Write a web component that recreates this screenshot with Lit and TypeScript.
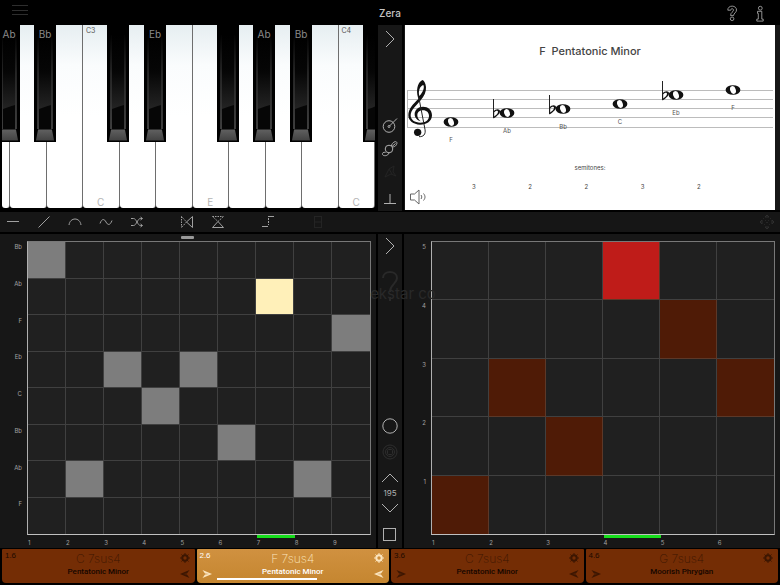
import { LitElement, html, svg, css, nothing, type TemplateResult } from "lit";
import { customElement, property, state } from "lit/decorators.js";
import { classMap } from "lit/directives/class-map.js";
import { styleMap } from "lit/directives/style-map.js";

const icon = (body: unknown, size = 20): TemplateResult => html`<svg
  class="icon"
  width=${size}
  height=${size}
  viewBox="0 0 ${size} ${size}"
  aria-hidden="true"
>${body}</svg>`;

const icons = {
  menu: svg`<path d="M2 4.500H18M2 9.500H18M2 13.500H18"/>`,
  help: svg`<path stroke-width=".8" d="M5.800 7.200C5.500 1.800 14.500 1.800 14.500 7C14.500 9.800 11.600 10 11.600 12.600H8.600C8.400 9.200 11.500 9.200 11.500 7.100C11.500 5.200 8.700 5.300 8.800 7.200z"/><circle stroke-width=".8" cx="10.100" cy="15.800" r="1.800"/>`,
  info: svg`<circle stroke-width=".8" cx="10.300" cy="5.200" r="1.900"/><path stroke-width=".8" d="M7.500 8.300h4.300v7.800h1.400v2H6.800v-2h1.500v-5.700h-.8z"/>`,
  right: svg`<path d="M6 2L14 10L6 18"/>`,
  up: svg`<path d="M2 14L10 6L18 14"/>`,
  down: svg`<path d="M2 6L10 14L18 6"/>`,
  needle: svg`<circle cx="9" cy="10.500" r="5.800"/><circle cx="9" cy="10.500" r="1"/><path d="M9.500 10L17 2.500"/>`,
  curl: svg`<circle cx="9" cy="10" r="3.800"/><path d="M5.500 13.500c-2-.8-3.500.5-3 2 .8 1.800 5.500 1.800 6.500-1.600M11.500 7C11.500 4.500 14.500 2 16.300 2.800C18 4 16 8 12.500 8M12 7.500L15.500 4.500"/>`,
  nib: svg`<path d="M5 15l4-8 5-3-1 6 3 4-5-2zM9 7l3 5"/>`,
  perp: svg`<path d="M4 14.500H16M10 14.500V5"/>`,
  circle: svg`<circle cx="10" cy="10" r="7.200"/>`,
  target: svg`<circle cx="10" cy="10" r="7"/><circle cx="10" cy="10" r="4.500"/><rect x="7.500" y="7.500" width="5" height="5" rx="1"/>`,
  square: svg`<rect x="3.500" y="4.500" width="12" height="12"/>`,
  flat: svg`<path d="M4 9.500H16"/>`,
  ramp: svg`<path d="M4.500 15.500L15.500 4.500"/>`,
  arc: svg`<path d="M4 13C5 5 15 5 16 13"/>`,
  wave: svg`<path d="M4 11.500C6 6 8.500 7 10 10S14 14 16 8.500"/>`,
  shuffle: svg`<path d="M4 6.500h2.500c3 0 4 7 7 7H15M4 13.500h2.500c3 0 4-7 7-7H15M13.500 5L15.500 6.500L13.500 8M13.500 12L15.500 13.500L13.500 15"/>`,
  mirrorH: svg`<path d="M15.500 4.500V15.500L9.500 10z"/><path stroke-dasharray="1.500 1" d="M4.500 4.500V15.500M4.500 4.500L9.500 10L4.500 15.500"/>`,
  mirrorV: svg`<path d="M4.500 15.500H15.500L10 9.500z"/><path stroke-dasharray="1.500 1" d="M4.500 4.500H15.500M4.500 4.500L10 9.500L15.500 4.500"/>`,
  step: svg`<path d="M10 4.500h6M4 14.500h6"/><path stroke-dasharray="2 1" d="M10.500 6V13"/>`,
  stack: svg`<rect x="6.500" y="4.500" width="7" height="11"/><path d="M6.500 10h7"/>`,
  move: svg`<path d="M8 5L10 3L12 5zM8 15L10 17L12 15zM5 8L3 10L5 12zM15 8L17 10L15 12z"/><path stroke-dasharray="1 2" d="M6 6L14 14M14 6L6 14"/>`,
  gear: svg`<circle class="hub" cx="6" cy="6" r="2.700"/><path class="teeth" d="M6 1v1.800M6 9.200V11M1 6h1.800M9.200 6H11M2.500 2.500l1.200 1.200M8.300 8.300l1.200 1.200M2.500 9.500l1.200-1.200M8.300 3.700l1.200-1.200"/>`,
  dartRight: svg`<path class="solid" d="M1.500 2L11 6L1.500 10L4 6.500L8 6L4 5.500z"/>`,
  dartLeft: svg`<path class="solid" d="M10.500 2L1 6L10.500 10L8 6.500L4 6L8 5.500z"/>`,
};

const shared = css`
  * { box-sizing: border-box; }
  button {
    appearance: none;
    border: 0;
    padding: 0;
    margin: 0;
    background: none;
    color: inherit;
    font: inherit;
    cursor: pointer;
  }
  svg { display: block; }
  .icon { fill: none; stroke: currentColor; stroke-width: 1; }
`;

/* Piano keyboard */

const WHITE_KEYS = [
  { w: 8, top: "", low: "" },
  ...["", "", "C3", "", "", "", "", "", "", "C4"].map((top, i) => ({
    w: 36.5,
    top,
    low: top ? "C" : i === 5 ? "E" : "",
  })),
];
const BLACK_KEYS = [
  { at: -4, name: "Ab" },
  { at: 32, name: "Bb" },
  { at: 105, name: "" },
  { at: 142, name: "Eb" },
  { at: 215, name: "" },
  { at: 251, name: "Ab" },
  { at: 288, name: "Bb" },
  { at: 361, name: "" },
];
const SPAN = 373;
const share = (n: number) => `${(n / SPAN) * 100}%`;

@customElement("piano-keys")
export class PianoKeys extends LitElement {
  static styles = [
    shared,
    css`
      :host { display: block; background: #000; padding: 0 1px 4px 2px; }
      .board { position: relative; display: flex; height: 100%; overflow: hidden; }
      .white {
        flex: none;
        display: flex;
        flex-direction: column;
        justify-content: space-between;
        border-right: 1px solid #6e6e6e;
        border-radius: 0 0 3px 3px;
        background: linear-gradient(#e6eef1, #fafcfd 22%, #fff 50%);
        font: 7px/12px Inter, sans-serif;
        color: #555;
        text-align: left;
      }
      .high { margin-left: 3px; }
      .low { align-self: center; font-size: 10px; color: #b4b4b4; }
      .black {
        position: absolute;
        top: 0;
        width: 5.9%;
        height: 64%;
        background: #000;
        color: #8a8a8a;
        font: 10px/18px Inter, sans-serif;
      }
      .face { position: absolute; inset: 0; width: 100%; height: 100%; }
      .name { position: absolute; inset: 0 -4px auto; text-align: center; }
    `,
  ];

  render() {
    return html`<div class="board">
      ${WHITE_KEYS.map(
        (k) => html`<button class="white" aria-label=${k.low || "white key"} style=${styleMap({ width: share(k.w) })}>
          <span class="high">${k.top}</span><span class="low">${k.low}</span>
        </button>`
      )}
      ${BLACK_KEYS.map(
        (k) => html`<button class="black" aria-label=${k.name || "black key"} style=${styleMap({ left: share(k.at) })}>
          <svg class="face" viewBox="0 0 22 117" preserveAspectRatio="none" aria-hidden="true">
            <defs>
              <linearGradient id="edge" x1="0" y1="0" x2="0" y2="1">
                <stop offset="0" stop-color="#000" /><stop offset=".4" stop-color="#444" /><stop offset="1" stop-color="#777" />
              </linearGradient>
              <linearGradient id="shine" x1="0" y1="0" x2="0" y2="1">
                <stop offset="0" stop-color="#000" /><stop offset=".5" stop-color="#060606" /><stop offset="1" stop-color="#242424" />
              </linearGradient>
              <linearGradient id="cap" x1="0" y1="0" x2="0" y2="1">
                <stop offset="0" stop-color="#606060" /><stop offset="1" stop-color="#424242" />
              </linearGradient>
            </defs>
            <path fill="#060606" d="M4 10H18V104H4z" />
            <path fill="url(#shine)" d="M5 10H17V80C12 81 9 83 5 84z" />
            <path fill="url(#edge)" d="M3.500 10H4.500V104H3.500zM17.500 10H18.500V104H17.500z" />
            <path fill="url(#cap)" d="M4 104.500H18L20 115.500H2z" />
          </svg>
          <span class="name">${k.name}</span>
        </button>`
      )}
    </div>`;
  }
}

/* Scale notation */

const NOTES = [
  { x: 451, y: 122, name: "F", flat: false },
  { x: 507, y: 113, name: "Ab", flat: true },
  { x: 563, y: 109, name: "Bb", flat: true },
  { x: 620, y: 104, name: "C", flat: false },
  { x: 676, y: 95, name: "Eb", flat: true },
  { x: 733, y: 90, name: "F", flat: false },
];
const STEPS = [3, 2, 2, 3, 2];

@customElement("scale-sheet")
export class ScaleSheet extends LitElement {
  static styles = [
    shared,
    css`
      :host {
        display: flex;
        flex-direction: column;
        margin-bottom: 2px;
        background: #fff;
        color: #444;
        border: 0 solid #171717;
        border-width: 0 5px 0 1px;
        font-family: Inter, sans-serif;
      }
      h2 { margin: 18px 0 9px; text-align: center; font-size: 11px; line-height: 16px; font-weight: 500; white-space: pre; }
      .staff { width: 100%; flex: none; }
      .line { stroke: #bcbcbc; }
      .ink { fill: #111; stroke: none; }
      .pen { fill: none; stroke: #222; }
      .hole { fill: #fff; }
      text { font: 6px Inter, sans-serif; fill: #555; text-anchor: middle; }
      .caption { margin: 19px 0 0; font-size: 6px; line-height: 10px; text-align: center; }
      .steps {
        display: grid;
        grid-template-columns: repeat(5, 1fr);
        margin: 10px 13% 0 11%;
        padding: 0;
        list-style: none;
        font-size: 6px;
        line-height: 8px;
        text-align: center;
      }
      .sound { width: 20px; height: 20px; margin: -4px 0 0 4px; color: #666; }
    `,
  ];

  render() {
    return html`
      <h2>F  Pentatonic Minor</h2>
      <svg class="staff" viewBox="405 68 370 76" role="img" aria-label="F pentatonic minor scale">
        <path class="line" d="M407 90.500H773M407 99.500H773M407 108.500H773M407 117.500H773M407 127.500H773M407.500 90V128" />
        <g transform="translate(370 0) scale(.3333)">
          <path
            class="ink"
            fill-rule="evenodd"
            d="M157 240C146 246 139 262 142 284L145 297C130 312 115 326 115 346C115 362 130 374 150 374C170 374 186 364 186 346C186 330 174 320 159 320C144 320 134 330 134 343C134 353 141 361 152 364C145 358 142 352 142 346C142 336 149 331 159 331C170 331 177 338 177 348C177 361 166 368 151 368C134 368 122 360 122 346C122 330 138 317 151 302C163 289 169 275 168 261C167 250 163 242 157 240zM160 255C164 262 160 275 148 288C144 272 150 258 160 255z"
          />
          <path class="pen" stroke-width="3" d="M146 290L165 388C168 403 160 411 147 410" />
          <circle class="ink" cx="143" cy="397" r="11" />
        </g>
        ${NOTES.map(
          (n) => svg`<g transform="translate(${n.x} ${n.y})">
            ${n.flat
              ? svg`<path class="pen" d="M-13.500 -14V5"/><path class="ink" fill-rule="evenodd" d="M-13.500 -1.500C-11.500-4.500-7-4.500-7-1.800C-7 .8-10.500 3.500-13.500 5.500zM-12.800 -.8V3.600C-10.500 2-9 .5-9-1.200C-9-3-11.500-2.600-12.800-.8z"/>`
              : nothing}
            <ellipse class="ink" rx="7.400" ry="4.800"/>
            <ellipse class="hole" rx="2.800" ry="4" transform="rotate(-18)"/>
            <text y="20">${n.name}</text>
          </g>`
        )}
      </svg>
      <p class="caption">semitones:</p>
      <ol class="steps">${STEPS.map((s) => html`<li>${s}</li>`)}</ol>
      <button class="sound" aria-label="Play scale">
        ${icon(svg`<path d="M1.500 7H5.500L10 3V17L5.500 13H1.500z"/><path d="M12 8C13 9.500 13 10.500 12 12M14.500 6.500C16.500 9 16.500 11 14.500 13.500"/>`)}
      </button>
    `;
  }
}

/* Step grid with row and column scales */

@customElement("step-grid")
export class StepGrid extends LitElement {
  @property({ attribute: false }) rows: string[] = [];
  @property({ type: Number }) columns = 0;
  @property({ type: Number }) current = 0;
  @property({ attribute: false }) steps: number[] = [];
  @property() tone = "grey";

  static styles = [
    shared,
    css`
      :host {
        display: grid;
        grid-template: minmax(0, 1fr) 13px / 27px minmax(0, 1fr);
        padding: 7px 5px 0 0;
        background: #171717;
        color: #a0a0a0;
        font: 6px/12px Inter, sans-serif;
      }
      .rows { display: grid; grid-auto-rows: 1fr; text-align: right; padding-right: 5px; }
      .body { display: grid; grid-auto-rows: 1fr; border: 1px solid #787878; border-left-color: #b0b0b0; border-bottom-color: #c0c0c0; }
      .cell { background: #202020; border: 0 solid #404040; border-width: 0 1px 1px 0; }
      .edge { border-right: 0; }
      .foot { border-bottom: 0; }
      .grey.on { background: #7d7d7d; }
      .grey.live { background: #fff0b9; }
      .brown.on { background: #4f1b06; border-color: #5c3828; }
      .brown.live { background: #bf1c19; }
      .cols { grid-column: 2; display: grid; padding-left: 1px; }
      .col { border-top: 3px solid transparent; line-height: 9px; }
      .col.now { border-top-color: #17dd1c; }
    `,
  ];

  render() {
    const template = { gridTemplateColumns: `repeat(${this.columns}, minmax(0, 1fr))` };
    const last = this.rows.length - 1;
    return html`
      <div class="rows">${this.rows.map((r) => html`<span>${r}</span>`)}</div>
      <div class="body" style=${styleMap(template)}>
        ${this.rows.map((name, r) =>
          Array.from({ length: this.columns }, (_, c) => {
            const on = this.steps[c] === r;
            return html`<button
              aria-label="${name} step ${c + 1}"
              aria-pressed=${on ? "true" : "false"}
              class=${classMap({
                cell: true,
                [this.tone]: true,
                on,
                live: on && c + 1 === this.current,
                edge: c === this.columns - 1,
                foot: r === last,
              })}
            ></button>`;
          })
        )}
      </div>
      <div class="cols" style=${styleMap(template)}>
        ${Array.from(
          { length: this.columns },
          (_, c) => html`<span class=${classMap({ col: true, now: c + 1 === this.current })}>${c + 1}</span>`
        )}
      </div>
    `;
  }
}

/* Chord pads */

interface Pad { tag: string; chord: string; scale: string; left: boolean; right: boolean }

const PADS: Pad[] = [
  { tag: "1.6", chord: "C 7sus4", scale: "Pentatonic Minor", left: false, right: true },
  { tag: "2.6", chord: "F 7sus4", scale: "Pentatonic Minor", left: true, right: true },
  { tag: "3.6", chord: "C 7sus4", scale: "Pentatonic Minor", left: true, right: true },
  { tag: "4.6", chord: "G 7sus4", scale: "Moorish Phrygian", left: true, right: false },
];

@customElement("app-root")
export class AppRoot extends LitElement {
  @state() private active = 1;
  @state() private tempo = 195;

  static styles = [
    shared,
    css`
      :host {
        display: grid;
        grid-template-rows: 25px minmax(180px, 187fr) 22px minmax(240px, 314fr) 37px;
        min-height: 100vh;
        background: #000;
        color: #b4b4b4;
        font-family: Inter, sans-serif;
      }
      .top { display: grid; grid-template-columns: 1fr auto 1fr; align-items: center; padding: 0 10px; }
      h1 { margin: 0; font-size: 10px; line-height: 16px; font-weight: 500; color: #c4c4c4; }
      .end { display: flex; justify-content: flex-end; gap: 8px; }
      .dim { color: #2e2e2e; }
      .faint { color: #242424; }
      .panels { display: grid; grid-template-columns: minmax(0, 1fr) 26px minmax(0, 1fr); column-gap: 1px; min-height: 0; position: relative; }
      .strip { display: flex; flex-direction: column; align-items: center; background: #171717; border: 0 solid #000; border-width: 0 1px; color: #b0b0b0; }
      .upper .strip { padding: 4px 0 2px; margin-bottom: 1px; }
      .lower .strip { padding: 2px 0 4px; }
      .tall { height: 23px; }
      .push { margin-top: auto; }
      .space { margin-top: 6px; }
      output { font-size: 8px; line-height: 10px; }
      .tools { display: flex; align-items: center; gap: 28px; padding: 0 2px; background: #161616; border-bottom: 2px solid #000; color: #a0a0a0; }
      .set { display: flex; gap: 9px; }
      .set button { width: 22px; display: grid; place-items: center; }
      .set:last-child { margin-left: auto; }
      .grip { position: absolute; top: 2px; left: 181px; width: 13px; height: 3px; border-radius: 1px; background: #999; }
      .hint { position: absolute; top: 36px; left: 0; right: 0; display: grid; justify-items: center; color: #292929; pointer-events: none; margin: 0; }
      .mark { fill: none; stroke: currentColor; stroke-width: 2; grid-area: 1 / 1; }
      .words { grid-area: 1 / 1; margin-top: 18px; padding-left: 26px; font-size: 15px; line-height: 12px; }
      .pads { display: grid; grid-template-columns: repeat(4, minmax(0, 1fr)); gap: 2px; padding: 1px 2px 2px; }
      .pad { display: grid; grid-template-columns: 20px minmax(0, 1fr) 20px; border-radius: 1px 1px 4px 4px; background: #742d05; color: #3c1602; }
      .pad.active { background: linear-gradient(#d09140, #c58630); color: #fbe5bf; }
      .side { display: flex; flex-direction: column; justify-content: space-between; align-items: center; padding: 3px 0; }
      .tag { font: 8px/8px "Liberation Sans", sans-serif; padding-right: 3px; color: #1c0a00; }
      .face { display: flex; flex-direction: column; align-items: stretch; justify-content: flex-start; padding-top: 3px; }
      .chord { font-size: 12px; line-height: 14px; font-weight: 200; }
      .scale { font: 500 8px/12px Roboto, sans-serif; color: #140600; }
      .active .tag, .active .scale { color: #fff; }
      progress { appearance: none; display: block; width: 100%; height: 2px; border: 0; background: none; }
      progress::-webkit-progress-bar { background: none; }
      progress::-webkit-progress-value { background: #fff; }
      .hub { stroke-width: 2; }
      .teeth { stroke-width: 1; }
      .solid { fill: currentColor; stroke: none; }
    `,
  ];

  private tool(name: keyof typeof icons, label: string, extra = "") {
    return html`<button class=${extra} aria-label=${label}>${icon(icons[name])}</button>`;
  }

  private pad(p: Pad, i: number) {
    const active = i === this.active;
    return html`<article class=${classMap({ pad: true, active })}>
      <div class="side">
        <span class="tag">${p.tag}</span>
        ${p.left ? html`<button aria-label="Next from ${p.tag}">${icon(icons.dartRight, 12)}</button>` : nothing}
      </div>
      <button class="face" @click=${() => (this.active = i)}>
        <span class="chord">${p.chord}</span>
        <span class="scale">${p.scale}</span>
        ${active ? html`<progress max="100" value="66" aria-label="Position"></progress>` : nothing}
      </button>
      <div class="side">
        <button aria-label="Settings ${p.tag}">${icon(icons.gear, 12)}</button>
        ${p.right ? html`<button aria-label="Back from ${p.tag}">${icon(icons.dartLeft, 12)}</button>` : nothing}
      </div>
    </article>`;
  }

  render() {
    return html`
      <header class="top">
        <div>${this.tool("menu", "Menu", "dim")}</div>
        <h1>Zera</h1>
        <div class="end">${this.tool("help", "Help")}${this.tool("info", "Info")}</div>
      </header>

      <section class="panels upper">
        <piano-keys></piano-keys>
        <div class="strip">
          ${this.tool("right", "Expand keyboard")}
          ${this.tool("needle", "Dial", "tall push")}
          ${this.tool("curl", "Link", "tall")}
          ${this.tool("nib", "Draw", "tall faint")}
          ${this.tool("perp", "Base", "space")}
        </div>
        <scale-sheet></scale-sheet>
      </section>

      <nav class="tools" aria-label="Shapes">
        <div class="set">
          ${this.tool("flat", "Flat")}${this.tool("ramp", "Ramp")}${this.tool("arc", "Arc")}${this.tool("wave", "Wave")}${this.tool("shuffle", "Shuffle")}
        </div>
        <div class="set">${this.tool("mirrorH", "Mirror horizontally")}${this.tool("mirrorV", "Mirror vertically")}</div>
        <div class="set">${this.tool("step", "Transpose")}</div>
        <div class="set">${this.tool("stack", "Stack", "faint")}</div>
        <div class="set">${this.tool("move", "Move", "dim")}</div>
      </nav>

      <section class="panels lower">
        <step-grid
          .rows=${["Bb", "Ab", "F", "Eb", "C", "Bb", "Ab", "F"]}
          .columns=${9}
          .current=${7}
          .steps=${[0, 6, 3, 4, 3, 5, 1, 6, 2]}
        ></step-grid>
        <div class="strip">
          ${this.tool("right", "Expand steps")}
          ${this.tool("circle", "Record", "push")}
          ${this.tool("target", "Loop", "space dim")}
          <button class="space" aria-label="Faster" @click=${() => this.tempo++}>${icon(icons.up)}</button>
          <output>${this.tempo}</output>
          <button aria-label="Slower" @click=${() => this.tempo--}>${icon(icons.down)}</button>
          ${this.tool("square", "Stop", "space")}
        </div>
        <step-grid
          tone="brown"
          .rows=${["5", "4", "3", "2", "1"]}
          .columns=${6}
          .current=${4}
          .steps=${[4, 2, 3, 0, 1, 2]}
        ></step-grid>
        <span class="grip"></span>
        <p class="hint">
          <svg class="mark" width="20" height="32" viewBox="0 0 20 32" aria-hidden="true">
            <path d="M3 8C3 0 17 0 17 8C17 14 10 14 10 22M10 27V31" />
          </svg>
          <span class="words">ekstar co</span>
        </p>
      </section>

      <section class="pads">${PADS.map((p, i) => this.pad(p, i))}</section>
    `;
  }
}
